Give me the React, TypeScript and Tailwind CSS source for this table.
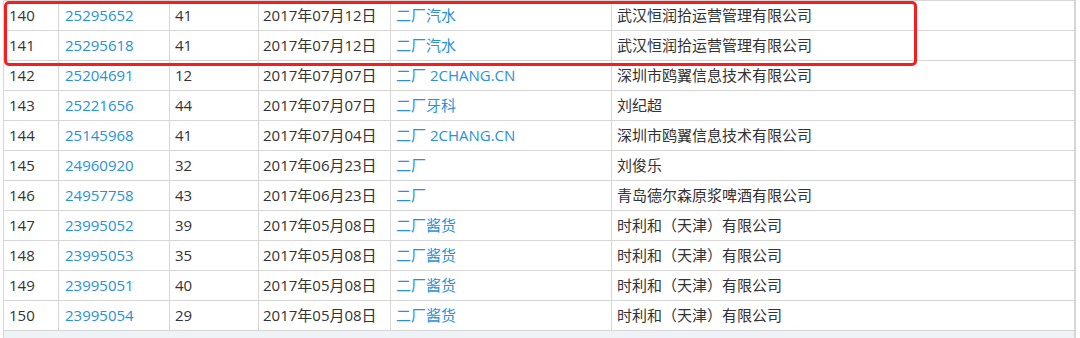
const rows = [
  ["140", "25295652", "41", "2017年07月12日", "二厂汽水", "武汉恒润拾运营管理有限公司"],
  ["141", "25295618", "41", "2017年07月12日", "二厂汽水", "武汉恒润拾运营管理有限公司"],
  ["142", "25204691", "12", "2017年07月07日", "二厂 2CHANG.CN", "深圳市鸥翼信息技术有限公司"],
  ["143", "25221656", "44", "2017年07月07日", "二厂牙科", "刘纪超"],
  ["144", "25145968", "41", "2017年07月04日", "二厂 2CHANG.CN", "深圳市鸥翼信息技术有限公司"],
  ["145", "24960920", "32", "2017年06月23日", "二厂", "刘俊乐"],
  ["146", "24957758", "43", "2017年06月23日", "二厂", "青岛德尔森原浆啤酒有限公司"],
  ["147", "23995052", "39", "2017年05月08日", "二厂酱货", "时利和（天津）有限公司"],
  ["148", "23995053", "35", "2017年05月08日", "二厂酱货", "时利和（天津）有限公司"],
  ["149", "23995051", "40", "2017年05月08日", "二厂酱货", "时利和（天津）有限公司"],
  ["150", "23995054", "29", "2017年05月08日", "二厂酱货", "时利和（天津）有限公司"],
];

export default function App() {
  return (
    <div
      className="relative w-[1080px] h-[338px] bg-white overflow-hidden pl-[3px] text-[15px] text-[#333]"
      style={{ fontFamily: '"Open Sans", "Noto Sans CJK SC", sans-serif' }}
    >
      <div className="w-[1073px] h-[338px] border-l border-r-2 border-[#d6d6d6] bg-[#eef3f8]">
        <div className="bg-white border-b border-[#d6d6d6]">
          {rows.map((r) => (
            <div
              key={r[0]}
              className="grid grid-cols-[55px_111px_89px_132px_221px_1fr] h-[30px] border-t border-[#d6d6d6]"
            >
              <div className="border-r border-[#d6d6d6] pl-[5px] flex items-center">{r[0]}</div>
              <div className="border-r border-[#d6d6d6] pl-[6px] flex items-center text-[#2891d8]">{r[1]}</div>
              <div className="border-r border-[#d6d6d6] pl-[5px] flex items-center">{r[2]}</div>
              <div className="border-r border-[#d6d6d6] pl-[4px] flex items-center">{r[3]}</div>
              <div className="border-r border-[#d6d6d6] pl-[5px] flex items-center text-[#2891d8]">{r[4]}</div>
              <div className="pl-[5px] flex items-center">{r[5]}</div>
            </div>
          ))}
        </div>
      </div>
      <div className="absolute left-[4px] top-[1px] w-[913px] h-[65px] border-[3px] border-[#f51d1d] rounded-[5px]" />
    </div>
  );
}
